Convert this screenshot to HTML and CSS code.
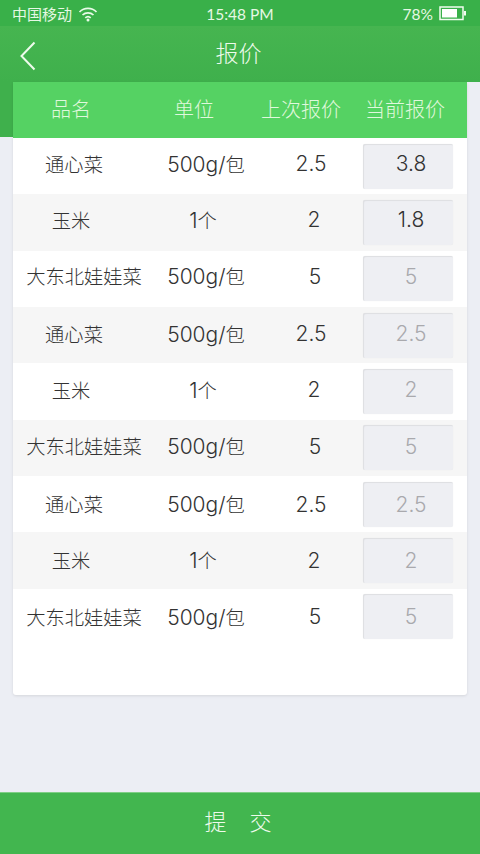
FILE: index.html
```html
<!DOCTYPE html>
<html lang="zh-CN">
<head>
<meta charset="utf-8">
<title>报价</title>
<link rel="stylesheet" href="styles.css">
</head>
<body>
<div class="app">
  <div class="left-strip"></div>
  <header class="top">
    <div class="status">
      <div class="status-left">
        <span class="carrier">中国移动</span>
        <svg class="wifi" viewBox="0 0 20 16" width="20" height="16"><path d="M1.5 6A12 12 0 0 1 18.5 6M4.5 9A8 8 0 0 1 15.500 9M7.300 11.800A4 4 0 0 1 12.700 11.800" fill="none" stroke="#eafbe9" stroke-width="1.700"/><circle cx="10" cy="14" r="1.500" fill="#eafbe9"/></svg>
      </div>
      <span class="time">15:48 PM</span>
      <div class="status-right">
        <span>78%</span>
        <svg class="battery" viewBox="0 0 28 15" width="28" height="15"><rect x="1" y="1" width="23" height="12.500" fill="none" stroke="#f2fbf0" stroke-width="1.500"/><rect x="3" y="3" width="15" height="8.500" fill="#fff"/><rect x="25" y="5" width="2" height="4.500" fill="#f2fbf0"/></svg>
      </div>
    </div>
    <nav class="nav">
      <svg class="back" viewBox="0 0 18 30" width="18" height="30"><path d="M15.500 1.500 2.500 15 15.500 28.500" fill="none" stroke="#eefbec" stroke-width="2"/></svg>
      <h1 class="title">报价</h1>
    </nav>
  </header>

  <main class="card">
    <div class="thead">
      <span class="th">品名</span>
      <span class="th">单位</span>
      <span class="th">上次报价</span>
      <span class="th">当前报价</span>
    </div>

    <div class="row a"><span class="cn">通心菜</span><span>500g/<span class="cn">包</span></span><span class="prev-v">2.5</span><div class="input on">3.8</div></div>
    <div class="row b alt"><span class="cn">玉米</span><span>1<span class="cn">个</span></span><span class="prev-v">2</span><div class="input on">1.8</div></div>
    <div class="row c"><span class="cn">大东北娃娃菜</span><span>500g/<span class="cn">包</span></span><span class="prev-v">5</span><div class="input">5</div></div>
    <div class="row a alt"><span class="cn">通心菜</span><span>500g/<span class="cn">包</span></span><span class="prev-v">2.5</span><div class="input">2.5</div></div>
    <div class="row b"><span class="cn">玉米</span><span>1<span class="cn">个</span></span><span class="prev-v">2</span><div class="input">2</div></div>
    <div class="row c alt"><span class="cn">大东北娃娃菜</span><span>500g/<span class="cn">包</span></span><span class="prev-v">5</span><div class="input">5</div></div>
    <div class="row a"><span class="cn">通心菜</span><span>500g/<span class="cn">包</span></span><span class="prev-v">2.5</span><div class="input">2.5</div></div>
    <div class="row b alt"><span class="cn">玉米</span><span>1<span class="cn">个</span></span><span class="prev-v">2</span><div class="input">2</div></div>
    <div class="row c"><span class="cn">大东北娃娃菜</span><span>500g/<span class="cn">包</span></span><span class="prev-v">5</span><div class="input">5</div></div>
  </main>

  <footer class="submit"><span>提</span><span>交</span></footer>
</div>
</body>
</html>
```
FILE: styles.css
```css
* { box-sizing: border-box; }
html, body { margin: 0; padding: 0; }
body {
  font-family: "Inter", "Noto Sans CJK SC", sans-serif;
  background: #eceef4;
}
.app {
  position: relative;
  width: 480px;
  height: 854px;
  overflow: hidden;
  display: flex;
  flex-direction: column;
  background: #eceef4;
}
.left-strip {
  position: absolute;
  left: 0;
  top: 82px;
  width: 13px;
  height: 55px;
  background: #3fb04c;
}
.top { height: 82px; flex: none; }
.status {
  height: 26px;
  padding: 1px 13px 0 12px;
  background: #39b049;
  color: #e6f8e4;
  display: grid;
  grid-template-columns: 1fr auto 1fr;
  align-items: center;
}
.status-left { display: flex; align-items: center; gap: 6px; }
.carrier { font-family: "Noto Sans CJK SC", sans-serif; font-size: 15px; }
.time { font-family: "Lato", sans-serif; font-size: 15.500px; margin-left: 1px; }
.status-right {
  display: flex;
  justify-content: flex-end;
  align-items: center;
  gap: 6px;
  font-family: "Lato", sans-serif;
  font-size: 15.500px;
}
.nav {
  height: 56px;
  background: linear-gradient(#46b550, #3fb04c);
  display: flex;
  align-items: center;
  justify-content: center;
  position: relative;
}
.back { position: absolute; left: 19px; top: 15px; }
.title {
  margin: -5px 3px 0 0;
  font-size: 23px;
  font-weight: 300;
  color: #eefbec;
  font-family: "Noto Sans CJK SC", sans-serif;
}
.card {
  position: relative;
  margin: 0 13px;
  height: 613px;
  flex: none;
  background: #fff;
  border-radius: 0 0 3px 3px;
  box-shadow: 0 1px 3px rgba(0, 0, 0, .1);
}
.thead {
  height: 56px;
  padding-bottom: 4px;
  background: #55d263;
  display: grid;
  grid-template-columns: 116px 130px 84px 1fr;
  align-items: center;
  color: #e0f8dd;
  font-family: "Noto Sans CJK SC", sans-serif;
  font-size: 20px;
  font-weight: 300;
  text-align: center;
  white-space: nowrap;
}
.row {
  --shift: 5px;
  height: 56.33px;
  display: grid;
  align-items: center;
  text-align: center;
  color: #333;
  font-size: 21px;
  font-weight: 300;
  white-space: nowrap;
}
.row:nth-child(n+5) { --shift: 3px; }
.row:nth-child(n+8) { --shift: 0px; }
.row > span { margin-bottom: var(--shift); }
.cn {
  font-family: "Noto Sans CJK SC", sans-serif;
  font-size: 19.300px;
}
.row.a { grid-template-columns: 122px 142px 68px 1fr; }
.row.b { grid-template-columns: 116px 148px 74px 1fr; }
.row.c { grid-template-columns: 142px 102px 106px 1fr; }
.row.c .prev-v { padding-left: 10px; }
.row.alt { background: #f6f6f6; }
.input {
  justify-self: end;
  width: 90px;
  height: 45px;
  margin-right: 14px;
  padding: 0 0 var(--shift) 6px;
  border-radius: 2px;
  background: #eeeff3;
  box-shadow: inset 1px 1px 1px rgba(0, 0, 0, .07), 0 0 1px rgba(0, 0, 0, .08);
  color: #a9a9ad;
  display: flex;
  align-items: center;
  justify-content: center;
}
.input.on { color: #333; }
.submit {
  margin-top: auto;
  height: 62px;
  flex: none;
  padding: 0 4px 8px 0;
  background: #42b64f;
  border-top: 1px solid #7fcf86;
  color: #eefbec;
  font-family: "Noto Sans CJK SC", sans-serif;
  font-size: 22px;
  font-weight: 300;
  display: flex;
  justify-content: center;
  align-items: center;
  gap: 23px;
}
```
